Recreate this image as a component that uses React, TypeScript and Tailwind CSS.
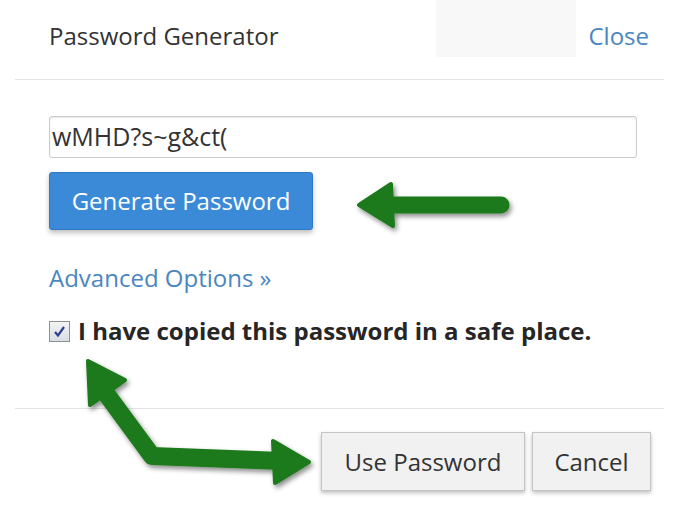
import React from "react";

function Arrows() {
  return (
    <svg
      className="pointer-events-none absolute inset-0"
      width={679}
      height={505}
      viewBox="0 0 679 505"
    >
      <defs>
        <filter id="arrowShadow" x="-20%" y="-20%" width="140%" height="140%">
          <feDropShadow dx="2" dy="3" stdDeviation="2.5" floodColor="#000" floodOpacity="0.45" />
        </filter>
      </defs>
      <g filter="url(#arrowShadow)" fill="#1b7a1b" stroke="#1b7a1b">
        {/* arrow pointing at Generate Password */}
        <line x1="385" y1="205" x2="501" y2="205" strokeWidth="17" strokeLinecap="round" />
        <polygon points="359,205 391,184 393,226" strokeWidth="4" strokeLinejoin="round" />

        {/* double arrow: checkbox -> Use Password */}
        <polyline
          points="102,388 152,456 282,461"
          fill="none"
          strokeWidth="18"
          strokeLinejoin="round"
        />
        <polygon points="88,361 125,380 90,405" strokeWidth="4" strokeLinejoin="round" />
        <polygon points="309,462 273,441 275,483" strokeWidth="4" strokeLinejoin="round" />
      </g>
    </svg>
  );
}

export default function App() {
  return (
    <div
      className="relative h-[505px] w-[679px] overflow-hidden bg-white text-[#333]"
      style={{ fontFamily: '"Open Sans", "Noto Sans", sans-serif' }}
    >
      {/* header */}
      <div className="mx-[15px] flex h-[80px] items-start border-b border-[#e3e3e3]">
        <div className="pl-[34px] pt-[20px] text-[24px] leading-[32px]">Password Generator</div>
        <div className="ml-auto h-[57px] w-[140px] bg-[#f8f8f8]" />
        <a className="pl-[12px] pr-[15px] pt-[20px] text-[24px] leading-[32px] text-[#4a86c0]">
          Close
        </a>
      </div>

      {/* body */}
      <div className="px-[49px]">
        <div className="mt-[36px] flex h-[42px] w-[588px] items-center rounded-[3px] border border-[#cbcbcb] pl-[2px] text-[25px] shadow-[inset_0_1px_2px_rgba(0,0,0,0.1)]">
          wMHD?s~g&amp;ct(
        </div>
        <button className="mt-[14px] flex h-[58px] w-[264px] items-center justify-center rounded-[3px] border border-[#2f78c4] bg-[#3b8ad8] text-[24px] text-white shadow-[0_3px_5px_rgba(0,0,0,0.25)]">
          Generate Password
        </button>
        <div className="mt-[32px] text-[24px] leading-[32px] text-[#4a86c0]">Advanced Options »</div>
        <label className="mt-[21px] flex items-center gap-[8px] text-[24px] font-bold leading-[32px] text-[#262626]">
          <span className="flex h-[21px] w-[21px] items-center justify-center border border-[#8e8f8f] bg-gradient-to-b from-[#f4f4f4] to-[#d9dde6]">
            <svg width="13" height="13" viewBox="0 0 13 13">
              <path d="M2 7 L5 10.5 L11 2" fill="none" stroke="#2b3f8f" strokeWidth="2.2" />
            </svg>
          </span>
          I have copied this password in a safe place.
        </label>
      </div>

      {/* footer */}
      <div className="mx-[15px] mt-[61px] border-t border-[#e3e3e3]" />
      <div className="mt-[23px] flex justify-end gap-[7px] pr-[28px]">
        <button className="h-[59px] w-[204px] border border-[#c4c4c4] bg-[#f1f1f1] text-[24px] text-[#333] shadow-[0_2px_4px_rgba(0,0,0,0.25)]">
          Use Password
        </button>
        <button className="h-[59px] w-[119px] border border-[#c4c4c4] bg-[#f1f1f1] text-[24px] text-[#333] shadow-[0_2px_4px_rgba(0,0,0,0.25)]">
          Cancel
        </button>
      </div>

      <Arrows />
    </div>
  );
}
